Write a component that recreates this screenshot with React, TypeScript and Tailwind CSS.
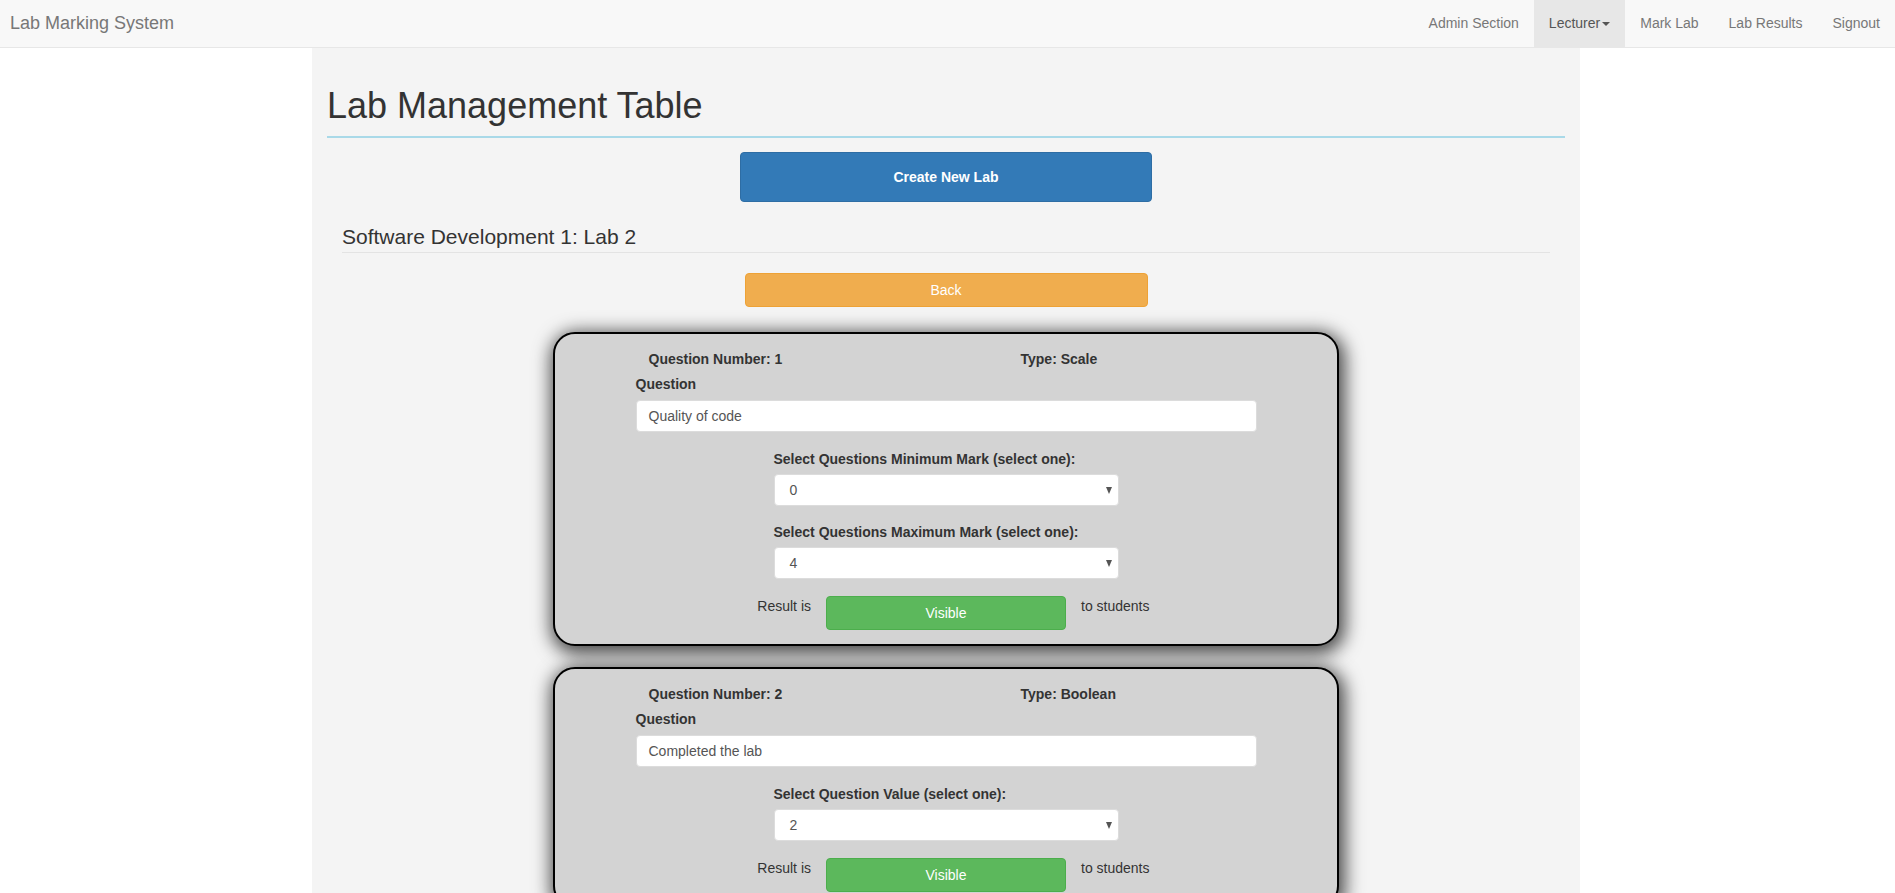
import React from "react";

function Select({ label, value }: { label: string; value: string }) {
  return (
    <div>
      <div className="font-bold leading-[20px]">{label}</div>
      <div className="mt-[5px] h-[32px] bg-white border border-[#dcdcdc] rounded-[4px] flex items-center justify-between pl-[15px] pr-[6px] text-[#555]">
        <span>{value}</span>
        <span className="w-0 h-0 border-x-[3px] border-t-[7px] border-x-transparent border-t-[#555]" />
      </div>
    </div>
  );
}

function Card({
  num,
  type,
  question,
  selects,
}: {
  num: number;
  type: string;
  question: string;
  selects: { label: string; value: string }[];
}) {
  return (
    <div className="w-[786px] mx-auto border-2 border-black rounded-[22px] bg-[#d3d3d3] shadow-[2px_4px_18px_4px_rgba(0,0,0,0.7)] pt-[15px] pb-[14px]">
      <div className="w-[621px] mx-auto">
        <div className="flex font-bold leading-[20px]">
          <div className="w-[385px] pl-[13px]">Question Number: {num}</div>
          <div>Type: {type}</div>
        </div>
        <div className="mt-[5px] font-bold leading-[20px]">Question</div>
        <div className="mt-[6px] h-[32px] bg-white border border-[#dcdcdc] rounded-[4px] flex items-center pl-[12px] text-[#555]">
          {question}
        </div>
        <div className="w-[345px] mx-auto mt-[17px] flex flex-col gap-[16px]">
          {selects.map((s) => (
            <Select key={s.label} label={s.label} value={s.value} />
          ))}
        </div>
        <div className="mt-[17px] grid grid-cols-[1fr_240px_1fr] items-start leading-[20px]">
          <div className="text-right pr-[15px]">Result is</div>
          <button className="h-[34px] bg-[#5cb85c] border border-[#4cae4c] rounded-[4px] text-white">
            Visible
          </button>
          <div className="pl-[15px]">to students</div>
        </div>
      </div>
    </div>
  );
}

export default function App() {
  const navItems = ["Admin Section", "Lecturer", "Mark Lab", "Lab Results", "Signout"];
  return (
    <div className="min-h-screen bg-white font-['Liberation_Sans',Arial,sans-serif] text-[14px] text-[#333]">
      <nav className="h-[48px] bg-[#f8f8f8] border-b border-[#e7e7e7] flex justify-between">
        <div className="pl-[10px] flex items-center text-[18px] text-[#777]">Lab Marking System</div>
        <ul className="flex">
          {navItems.map((n) =>
            n === "Lecturer" ? (
              <li key={n} className="px-[15px] flex items-center bg-[#e7e7e7] text-[#555]">
                {n}
                <span className="ml-[2px] w-0 h-0 border-x-[4px] border-t-[4px] border-x-transparent border-t-[#555]" />
              </li>
            ) : (
              <li key={n} className="px-[15px] flex items-center text-[#777]">
                {n}
              </li>
            )
          )}
        </ul>
      </nav>
      <div className="ml-[312px] w-[1268px] bg-[#f4f4f4] px-[15px] pb-[40px] min-h-[845px]">
        <h1 className="pt-[38px] text-[36px] leading-[40px] pb-[10px] border-b-2 border-[#a9d9e8]">
          Lab Management Table
        </h1>
        <button className="block mt-[14px] mx-auto w-[412px] h-[50px] bg-[#337ab7] border border-[#2e6da4] rounded-[4px] text-white font-bold">
          Create New Lab
        </button>
        <h3 className="mx-[15px] mt-[23px] text-[21px] leading-[23px] pb-[4px] border-b border-[#e3e3e3]">
          Software Development 1: Lab 2
        </h3>
        <button className="block mt-[20px] mx-auto w-[403px] h-[34px] bg-[#f0ad4e] border border-[#eea236] rounded-[4px] text-white">
          Back
        </button>
        <div className="mt-[25px] flex flex-col gap-[21px]">
          <Card
            num={1}
            type="Scale"
            question="Quality of code"
            selects={[
              { label: "Select Questions Minimum Mark (select one):", value: "0" },
              { label: "Select Questions Maximum Mark (select one):", value: "4" },
            ]}
          />
          <Card
            num={2}
            type="Boolean"
            question="Completed the lab"
            selects={[{ label: "Select Question Value (select one):", value: "2" }]}
          />
        </div>
      </div>
    </div>
  );
}
